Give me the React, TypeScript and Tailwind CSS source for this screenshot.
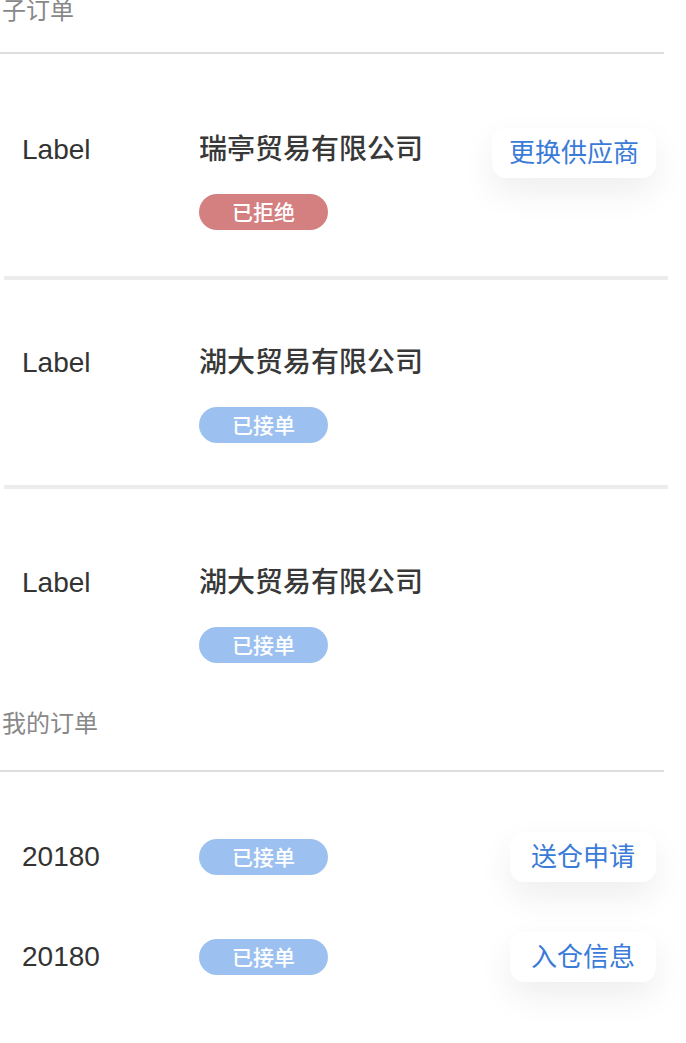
const font = { fontFamily: '"Liberation Sans", "Noto Sans CJK SC", sans-serif' };

type Sub = { label: string; company: string; status: 'rejected' | 'accepted'; action?: string; pt: string; pb: string };

const subOrders: Sub[] = [
  { label: 'Label', company: '瑞亭贸易有限公司', status: 'rejected', action: '更换供应商', pt: 'pt-[82px]', pb: 'pb-[46px]' },
  { label: 'Label', company: '湖大贸易有限公司', status: 'accepted', pt: 'pt-[69px]', pb: 'pb-[42px]' },
  { label: 'Label', company: '湖大贸易有限公司', status: 'accepted', pt: 'pt-[80px]', pb: 'pb-[49px]' },
];

function Badge({ status }: { status: 'rejected' | 'accepted' }) {
  return (
    <div
      className={`w-[129px] h-[36px] rounded-full flex items-center justify-center text-white text-[21px] font-medium leading-none ${
        status === 'rejected' ? 'bg-[#d48081]' : 'bg-[#9cc1f0]'
      }`}
    >
      {status === 'rejected' ? '已拒绝' : '已接单'}
    </div>
  );
}

function ActionButton({ text, width }: { text: string; width: string }) {
  return (
    <button
      className={`${width} h-[50px] rounded-[14px] bg-white text-[#3a7bd8] text-[26px] leading-none flex items-center justify-center shadow-[0_14px_34px_rgba(0,0,0,0.07)]`}
    >
      {text}
    </button>
  );
}

export default function App() {
  return (
    <div className="w-[686px] min-h-[1043px] bg-white overflow-hidden" style={font}>
      {/* 子订单 */}
      <div className="-mt-[1px] h-[55px] w-[664px] border-b-2 border-[#dddddd] pl-[2px] text-[24px] leading-[24px] text-[#888]">
        子订单
      </div>

      {subOrders.map((o, i) => (
        <div key={i}>
          <div className={`flex items-start pl-[22px] pr-[30px] ${o.pt} ${o.pb}`}>
            <div className="w-[177px] text-[28px] leading-[28px] text-[#333]">{o.label}</div>
            <div className="flex flex-col gap-[30px]">
              <div className="text-[28px] leading-[28px] font-medium text-[#383838]">{o.company}</div>
              <Badge status={o.status} />
            </div>
            {o.action && (
              <div className="ml-auto -mt-[8px]">
                <ActionButton text={o.action} width="w-[164px]" />
              </div>
            )}
          </div>
          {i < subOrders.length - 1 && <div className="ml-[4px] w-[664px] h-[4px] bg-[#ececec]" />}
        </div>
      ))}

      {/* 我的订单 */}
      <div className="h-[60px] w-[664px] border-b-2 border-[#dddddd] pl-[2px] text-[24px] leading-[24px] text-[#888]">
        我的订单
      </div>

      <div className="mt-[58px] flex flex-col gap-[46px]">
        {[
          { no: '20180', action: '送仓申请' },
          { no: '20180', action: '入仓信息' },
        ].map((r, i) => (
          <div key={i} className="flex items-center h-[54px] pl-[22px] pr-[30px]">
            <div className="w-[177px] text-[28px] leading-[28px] text-[#333]">{r.no}</div>
            <Badge status="accepted" />
            <div className="ml-auto">
              <ActionButton text={r.action} width="w-[146px]" />
            </div>
          </div>
        ))}
      </div>
    </div>
  );
}
